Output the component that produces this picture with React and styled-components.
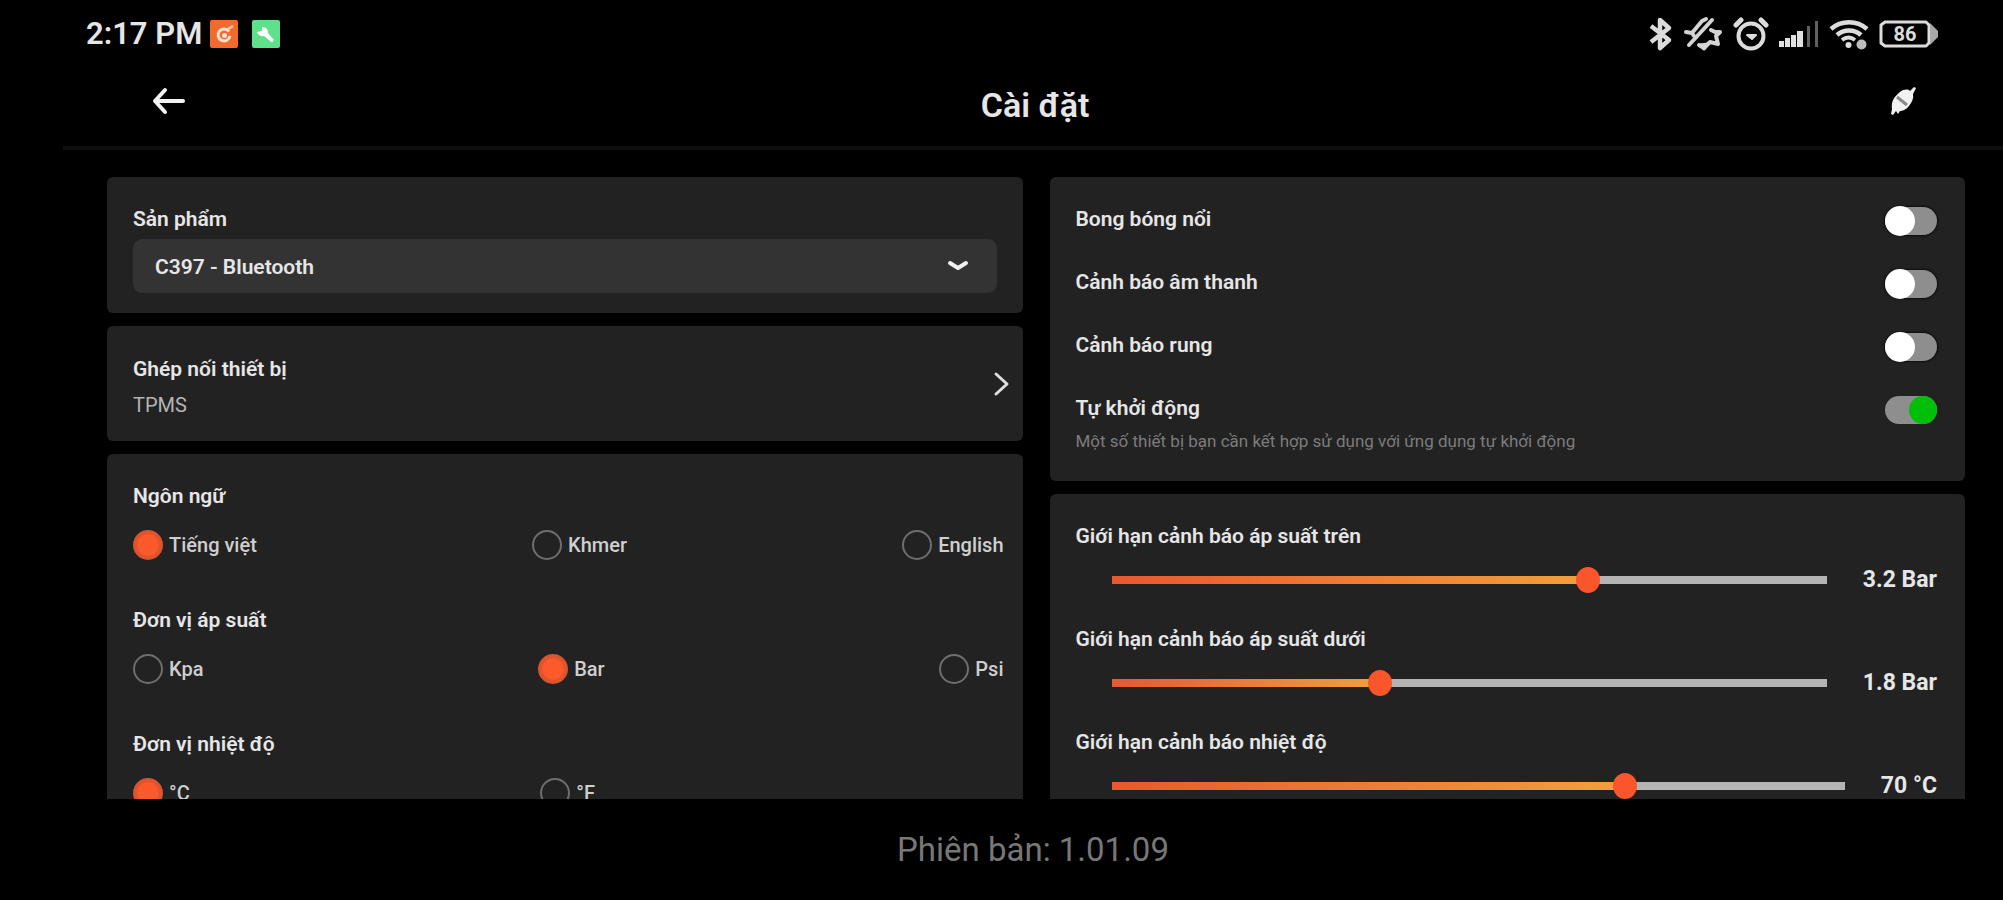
import React, { useId, useState } from 'react';
import styled, { createGlobalStyle } from 'styled-components';

const GlobalStyle = createGlobalStyle`
  *, *::before, *::after { box-sizing: border-box; }
  body {
    margin: 0;
    background: #000;
    color: #e6e6e6;
    font-family: Roboto, "Liberation Sans", sans-serif;
  }
`;

const Screen = styled.div`
  display: flex;
  flex-direction: column;
  height: 100vh;
  padding-left: 63px;
  background: #000;
  overflow: hidden;
`;

/* Status bar */
const StatusBar = styled.div`
  flex: none;
  display: flex;
  align-items: center;
  justify-content: space-between;
  height: 64px;
  padding: 4px 64px 0 23px;
`;

const StatusGroup = styled.div`
  display: flex;
  align-items: center;
  gap: ${(p) => p.$gap}px;
`;

const Clock = styled.time`
  margin-right: 8px;
  font-size: 31px;
  line-height: 36px;
  font-weight: 600;
`;

/* Header */
const Header = styled.header`
  flex: none;
  display: grid;
  grid-template-columns: 1fr auto 1fr;
  align-items: start;
  height: 86px;
  padding: 21px 84px 0 88px;
  border-bottom: 4px solid #0e0e0e;
`;

const Title = styled.h1`
  margin: 0;
  font-size: 34px;
  line-height: 40px;
  font-weight: 600;
`;

const IconButton = styled.button`
  display: flex;
  justify-self: ${(p) => p.$side};
  padding: 0;
  border: 0;
  background: none;
  color: #f2f2f2;
  cursor: pointer;
`;

/* Settings */
const Columns = styled.main`
  flex: 1;
  min-height: 0;
  display: grid;
  grid-template-columns: 1fr 1fr;
  align-items: start;
  gap: 27px;
  margin: 27px 38px 0 44px;
  overflow: hidden;
`;

const Column = styled.div`
  display: flex;
  flex-direction: column;
  gap: 13px;
`;

const Card = styled.section`
  display: flex;
  flex-direction: column;
  gap: ${(p) => p.$gap || 0}px;
  padding: 30px ${(p) => p.$right || 26}px ${(p) => p.$bottom || 30}px 26px;
  border-radius: 6px;
  background: #222;
`;

const Label = styled.label`
  display: block;
  font-size: 21px;
  line-height: 24px;
  font-weight: 600;
`;

const SelectBox = styled.div`
  display: grid;
  align-items: center;
  margin-top: 8px;
  & > * { grid-area: 1 / 1; }
  svg { justify-self: end; margin-right: 28px; pointer-events: none; }
`;

const Select = styled.select`
  appearance: none;
  width: 100%;
  height: 54px;
  padding: 2px 60px 0 22px;
  border: 0;
  border-radius: 9px;
  background: #333;
  color: inherit;
  font: 600 21px/24px Roboto, "Liberation Sans", sans-serif;
`;

const LinkCard = styled.a`
  display: flex;
  align-items: center;
  justify-content: space-between;
  padding: 0 12px 0 26px;
  border-radius: 6px;
  background: #222;
  color: inherit;
  text-decoration: none;
`;

const LinkText = styled.div`
  display: flex;
  flex-direction: column;
  gap: 12px;
  padding: 31px 0 24px;
`;

const LinkTitle = styled.span`
  font-size: 21px;
  line-height: 24px;
  font-weight: 600;
`;

const LinkValue = styled.span`
  color: #b4b4b4;
  font-size: 20px;
  line-height: 24px;
`;

const Group = styled.fieldset`
  min-width: 0;
  margin: 0;
  padding: 0;
  border: 0;
`;

const Legend = styled.legend`
  padding: 0;
  font-size: 21px;
  line-height: 24px;
  font-weight: 600;
`;

const Options = styled.div`
  display: flex;
  justify-content: space-between;
  margin-top: 22px;
`;

const Option = styled.label`
  display: flex;
  align-items: center;
  gap: 6px;
  color: #cfcfcf;
  font-size: 20px;
  line-height: 30px;
  font-weight: 500;
`;

const EmptyOption = styled.span`
  width: 58px;
`;

const Radio = styled.input`
  appearance: none;
  width: 30px;
  height: 30px;
  margin: 0;
  border: 2px solid #6e6e6e;
  border-radius: 50%;
  &:checked {
    border-color: #d9532c;
    background: radial-gradient(circle, #fc5a2b 0 10px, #e2552c 11px);
  }
`;

const Row = styled.div`
  display: flex;
  align-items: flex-start;
  justify-content: space-between;
  min-height: 28px;
`;

const Hint = styled.p`
  margin: 11px 0 0;
  color: #7c7c7c;
  font-size: 17px;
  line-height: 20px;
`;

const Toggle = styled.input`
  appearance: none;
  display: flex;
  align-items: center;
  width: 52px;
  height: 28px;
  margin: 0;
  border-radius: 14px;
  background: #8e8e8e;
  box-shadow: 0 0 2px 1px #0c0c0c;
  &::before {
    content: '';
    width: 30px;
    height: 30px;
    flex: none;
    border-radius: 50%;
    background: #fff;
  }
  &:checked { justify-content: flex-end; box-shadow: none; }
  &:checked::before { width: 28px; height: 28px; background: #00bf08; }
`;

const SliderRow = styled.div`
  display: flex;
  align-items: center;
  gap: 24px;
  height: 28px;
  margin: 18px 0 0 24px;
`;

const Slider = styled.input`
  appearance: none;
  flex: 1;
  min-width: 0;
  height: 28px;
  margin: 0;
  background:
    linear-gradient(90deg, #e9582f, #f2a03b) no-repeat 12px center / calc((100% - 24px) * var(--fill)) 8px,
    linear-gradient(#b4b4b4, #b4b4b4) no-repeat center / calc(100% - 24px) 8px;
  &::-webkit-slider-thumb {
    appearance: none;
    width: 24px;
    height: 26px;
    border-radius: 50%;
    background: #fb552b;
  }
`;

const Reading = styled.output`
  font-size: 23px;
  line-height: 28px;
  font-weight: 700;
`;

const Footer = styled.footer`
  flex: none;
  padding: 33px 0 32px;
  color: #777;
  font-size: 33px;
  line-height: 36px;
  text-align: center;
`;

/* Icons */
const RecorderBadge = () => (
  <svg width="28" height="28" viewBox="0 0 28 28" aria-hidden="true">
    <rect width="28" height="28" rx="2" fill="#f26a2e" />
    <path d="M19 11.5A6 6 0 1 0 20 16" fill="none" stroke="#ffe3d2" strokeWidth="3" />
    <circle cx="14.5" cy="15.5" r="2.5" fill="#ffe3d2" />
    <path d="M18 9l5-3" stroke="#ffc9a8" strokeWidth="2.5" />
  </svg>
);

const ToolBadge = () => (
  <svg width="28" height="28" viewBox="0 0 28 28" aria-hidden="true">
    <rect width="28" height="28" rx="2" fill="#5fe08a" />
    <path d="M5 12l5-1 0-4c4 0 6 2 6 6L22 20l-2 2.500L12 16C9 17 6 15 5 12z" fill="#fff" />
  </svg>
);

const BluetoothIcon = () => (
  <svg width="24" height="36" viewBox="0 0 24 36" fill="none" stroke="#dcdcdc" strokeWidth="4.500" strokeLinejoin="round" aria-hidden="true">
    <path d="M2 10l18 14-9 8V4l9 8L2 26" />
  </svg>
);

const MutedBellIcon = () => (
  <svg width="40" height="36" viewBox="0 0 40 36" fill="none" stroke="#d4d4d4" strokeWidth="4" strokeLinecap="round" strokeLinejoin="round" aria-hidden="true">
    <path d="M3 16l6 1 10-12 4-2M9 17l2 3" />
    <path d="M6 29L29 4" />
    <path d="M28 14l4 2 5 0-4 4 2 8-8-2-6 6-5-3" />
    <path d="M17 29l4 4 4-5z" fill="#d4d4d4" strokeWidth="3" />
  </svg>
);

const AlarmIcon = () => (
  <svg width="36" height="36" viewBox="0 0 36 36" fill="none" stroke="#dcdcdc" strokeWidth="4" strokeLinecap="round" aria-hidden="true">
    <circle cx="18" cy="20" r="12.500" />
    <path d="M3 9l5-5M33 9l-5-5" strokeWidth="5" />
    <path d="M14 19h9l-4 4z" fill="#dcdcdc" strokeWidth="2" strokeLinejoin="round" />
  </svg>
);

const SignalIcon = () => (
  <svg width="40" height="28" viewBox="0 0 40 28" aria-hidden="true">
    <g fill="#e0e0e0">
      <rect x="0" y="21" width="5" height="6" />
      <rect x="6" y="18" width="5" height="9" />
      <rect x="12" y="15" width="5" height="12" />
      <rect x="18" y="11" width="6" height="16" />
    </g>
    <rect x="28" y="6" width="3" height="21" fill="#606060" />
    <rect x="36" y="1" width="3" height="26" fill="#606060" />
  </svg>
);

const WifiIcon = () => (
  <svg width="40" height="32" viewBox="0 0 40 32" fill="none" stroke="#dcdcdc" strokeWidth="4.500" aria-hidden="true">
    <path d="M2 11c10-9 26-9 36 0" />
    <path d="M8 17c7-6 17-6 24 0" />
    <path d="M13 22c4-3 9-3 13 0" strokeWidth="4" />
    <circle cx="19.500" cy="27" r="3" fill="#dcdcdc" stroke="none" />
    <circle cx="32.500" cy="26.500" r="5" fill="#bdbdbd" stroke="none" />
  </svg>
);

const BatteryIcon = () => (
  <svg width="60" height="28" viewBox="0 0 60 28" role="img" aria-label="Pin 86%">
    <path d="M6 2h41l3 3v18l-3 3H6l-4-3V5z" fill="none" stroke="#dcdcdc" strokeWidth="3" strokeLinejoin="round" />
    <path d="M51 3l8 8v6l-8 8z" fill="#a8a8a8" />
    <text x="26" y="21" textAnchor="middle" fill="#dcdcdc" fontSize="20" fontWeight="700" fontFamily="Roboto, sans-serif">86</text>
  </svg>
);

const BackIcon = () => (
  <svg width="36" height="32" viewBox="0 0 36 32" fill="none" stroke="currentColor" strokeWidth="4" strokeLinecap="round" strokeLinejoin="round" aria-hidden="true">
    <path d="M32 16H4M14 5L4 16l10 11" />
  </svg>
);

const PlugIcon = () => (
  <svg width="32" height="32" viewBox="0 0 32 32" aria-hidden="true">
    <path d="M13 7c4-3 8-3 10-1l4-4 2 1-3 6c1 4-1 8-4 12s-7 5-9 5l-2 3-2-3-3 4-2-1 1-5c-1-8 2-12 8-17z" fill="currentColor" />
    <path d="M10 12l10 8" stroke="#8a8a8a" strokeWidth="3" />
  </svg>
);

const ChevronDown = () => (
  <svg width="22" height="12" viewBox="0 0 22 12" fill="none" stroke="#f0f0f0" strokeWidth="4" strokeLinecap="round" strokeLinejoin="round" aria-hidden="true">
    <path d="M3 3l8 5 8-5" />
  </svg>
);

const ChevronRight = () => (
  <svg width="18" height="26" viewBox="0 0 18 26" fill="none" stroke="#dedede" strokeWidth="3" strokeLinecap="round" strokeLinejoin="round" aria-hidden="true">
    <path d="M3 3l11 10L3 23" />
  </svg>
);

function RadioGroup({ title, options, initial, children }) {
  const name = useId();
  const [value, setValue] = useState(initial);
  return (
    <Group>
      <Legend>{title}</Legend>
      <Options>
        {options.map((option) => (
          <Option key={option}>
            <Radio type="radio" name={name} checked={value === option} onChange={() => setValue(option)} />
            {option}
          </Option>
        ))}
        {children}
      </Options>
    </Group>
  );
}

function ToggleRow({ title, hint, initial = false }) {
  const id = useId();
  const [on, setOn] = useState(initial);
  return (
    <Row>
      <div>
        <Label htmlFor={id}>{title}</Label>
        {hint && <Hint>{hint}</Hint>}
      </div>
      <Toggle id={id} type="checkbox" role="switch" checked={on} onChange={() => setOn(!on)} />
    </Row>
  );
}

function LimitSlider({ title, unit, max, step, initial }) {
  const id = useId();
  const [value, setValue] = useState(initial);
  return (
    <div>
      <Label htmlFor={id}>{title}</Label>
      <SliderRow>
        <Slider
          id={id}
          type="range"
          min={0}
          max={max}
          step={step}
          value={value}
          onChange={(e) => setValue(Number(e.target.value))}
          style={{ '--fill': value / max }}
        />
        <Reading htmlFor={id}>{value} {unit}</Reading>
      </SliderRow>
    </div>
  );
}

export default function App() {
  return (
    <Screen>
      <GlobalStyle />
      <StatusBar>
        <StatusGroup $gap={14}>
          <StatusGroup $gap={0}>
            <Clock>2:17 PM</Clock>
            <RecorderBadge />
          </StatusGroup>
          <ToolBadge />
        </StatusGroup>
        <StatusGroup $gap={10}>
          <BluetoothIcon />
          <MutedBellIcon />
          <AlarmIcon />
          <SignalIcon />
          <WifiIcon />
          <BatteryIcon />
        </StatusGroup>
      </StatusBar>

      <Header>
        <IconButton type="button" aria-label="Quay lại" $side="start"><BackIcon /></IconButton>
        <Title>Cài đặt</Title>
        <IconButton type="button" aria-label="Kết nối" $side="end"><PlugIcon /></IconButton>
      </Header>

      <Columns>
        <Column>
          <Card $bottom={20}>
            <Label htmlFor="product">Sản phẩm</Label>
            <SelectBox>
              <Select id="product" defaultValue="c397">
                <option value="c397">C397 - Bluetooth</option>
              </Select>
              <ChevronDown />
            </SelectBox>
          </Card>
          <LinkCard href="#pairing">
            <LinkText>
              <LinkTitle>Ghép nối thiết bị</LinkTitle>
              <LinkValue>TPMS</LinkValue>
            </LinkText>
            <ChevronRight />
          </LinkCard>
          <Card $gap={48} $right={19}>
            <RadioGroup title="Ngôn ngữ" options={['Tiếng việt', 'Khmer', 'English']} initial="Tiếng việt" />
            <RadioGroup title="Đơn vị áp suất" options={['Kpa', 'Bar', 'Psi']} initial="Bar" />
            <RadioGroup title="Đơn vị nhiệt độ" options={['°C', '°F']} initial="°C">
              <EmptyOption />
            </RadioGroup>
          </Card>
        </Column>

        <Column>
          <Card $gap={35} $right={28}>
            <ToggleRow title="Bong bóng nổi" />
            <ToggleRow title="Cảnh báo âm thanh" />
            <ToggleRow title="Cảnh báo rung" />
            <ToggleRow
              title="Tự khởi động"
              hint="Một số thiết bị bạn cần kết hợp sử dụng với ứng dụng tự khởi động"
              initial
            />
          </Card>
          <Card $gap={33} $right={28}>
            <LimitSlider title="Giới hạn cảnh báo áp suất trên" unit="Bar" max={4.8} step={0.1} initial={3.2} />
            <LimitSlider title="Giới hạn cảnh báo áp suất dưới" unit="Bar" max={4.8} step={0.1} initial={1.8} />
            <LimitSlider title="Giới hạn cảnh báo nhiệt độ" unit="°C" max={100} step={1} initial={70} />
          </Card>
        </Column>
      </Columns>

      <Footer>Phiên bản: 1.01.09</Footer>
    </Screen>
  );
}
